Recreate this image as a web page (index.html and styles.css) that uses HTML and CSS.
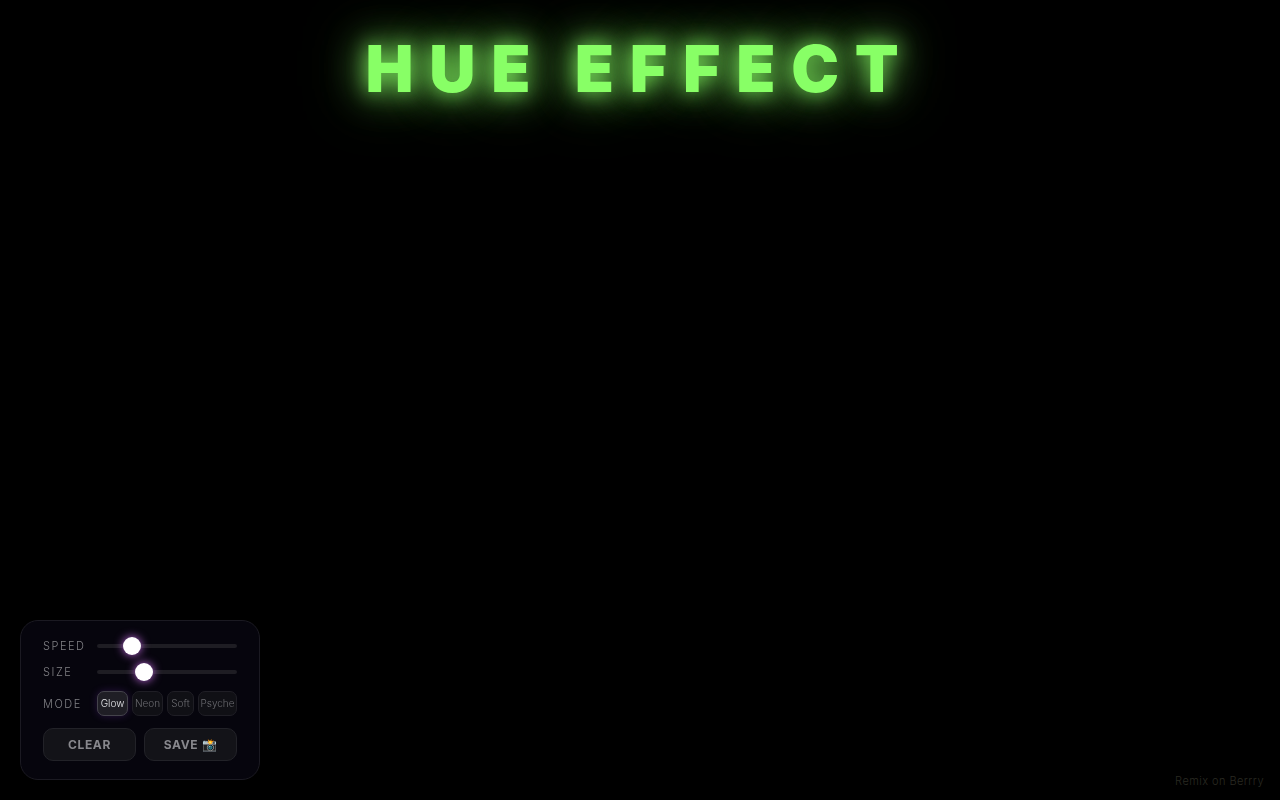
FILE: index.html
```html
<!DOCTYPE html>
<html lang="en">
<head>
<meta charset="utf-8">
<title>Hue Effect</title>
<link rel="stylesheet" href="styles.css">
</head>
<body>
<h1 class="title">HUE EFFECT</h1>
<div class="panel">
  <div class="row row-speed">
    <label class="label" for="speed">SPEED</label>
    <input class="slider" id="speed" type="range" min="0" max="100" step="any" value="20.8">
  </div>
  <div class="row row-size">
    <label class="label" for="size">SIZE</label>
    <input class="slider" id="size" type="range" min="0" max="100" step="any" value="30">
  </div>
  <div class="row row-mode">
    <span class="label">MODE</span>
    <div class="chips">
      <button class="chip chip-active">Glow</button>
      <button class="chip">Neon</button>
      <button class="chip">Soft</button>
      <button class="chip">Psyche</button>
    </div>
  </div>
  <div class="actions">
    <button class="action">CLEAR</button>
    <button class="action">SAVE 📸</button>
  </div>
</div>
<a class="remix">Remix on Berrry</a>
</body>
</html>
```
FILE: styles.css
```css
* { box-sizing: border-box; }
html, body { margin: 0; height: 100%; }
body {
  background: #000;
  height: 800px;
  overflow: hidden;
  position: relative;
  font-family: "Inter", "Liberation Sans", sans-serif;
}
.title {
  margin: 0;
  padding-top: 30px;
  text-align: center;
  font-family: "Inter", sans-serif;
  font-weight: 900;
  font-size: 64px;
  line-height: 78px;
  letter-spacing: 15.8px;
  color: #88ff66;
  text-shadow: 0 0 20px rgba(136,255,102,.8), 0 0 40px rgba(136,255,102,.8), 0 0 60px rgba(136,255,102,.5);
}
.panel {
  position: absolute;
  left: 20px;
  bottom: 20px;
  width: 240px;
  height: 160px;
  padding: 16px 22px 18px;
  background: rgba(7,5,14,.9);
  backdrop-filter: blur(10px);
  border: 1px solid #1b1a22;
  border-radius: 18px;
  display: flex;
  flex-direction: column;
}
.row { display: flex; align-items: center; }
.row-speed, .row-size { height: 18px; }
.row-size { margin-top: 8px; }
.row-mode { margin-top: 10px; height: 25px; }
.label {
  width: 54px;
  flex: none;
  font-size: 11px;
  font-weight: 300;
  letter-spacing: 0.14em;
  color: #808085;
}
.slider {
  -webkit-appearance: none;
  appearance: none;
  margin: 0;
  width: 140px;
  height: 4px;
  border-radius: 2px;
  background: #1e1d23;
  outline: none;
}
.slider::-webkit-slider-thumb {
  -webkit-appearance: none;
  width: 18px;
  height: 18px;
  margin: 0 1px;
  border-radius: 50%;
  background: #fff;
  box-shadow: 0 0 10px rgba(220,120,255,.9);
}
.chips { display: flex; gap: 4px; }
.chip {
  height: 25px;
  padding: 0 0 1px;
  font: 300 10px "Inter", sans-serif;
  color: #6a6a6f;
  background: #101015;
  border: 1px solid #1f1e25;
  border-radius: 7px;
}
.chip:nth-child(1), .chip:nth-child(2) { width: 31px; }
.chip:nth-child(3) { width: 27px; }
.chip:nth-child(4) { width: 39px; }
.chip-active {
  color: #e4e4e8;
  background: #1f1e25;
  border-color: #44434b;
  box-shadow: 0 0 8px rgba(170,80,255,.2);
}
.actions { display: flex; gap: 8px; margin-top: 12px; }
.action {
  flex: 1;
  height: 33px;
  padding: 0;
  font: 700 12px "Inter", sans-serif;
  letter-spacing: 0.05em;
  color: #88888d;
  background: #131318;
  border: 1px solid #222228;
  border-radius: 10px;
}
.remix {
  position: absolute;
  right: 16px;
  bottom: 12px;
  font-size: 11px;
  font-weight: 300;
  letter-spacing: 0.04em;
  color: #2a2a22;
}
```
